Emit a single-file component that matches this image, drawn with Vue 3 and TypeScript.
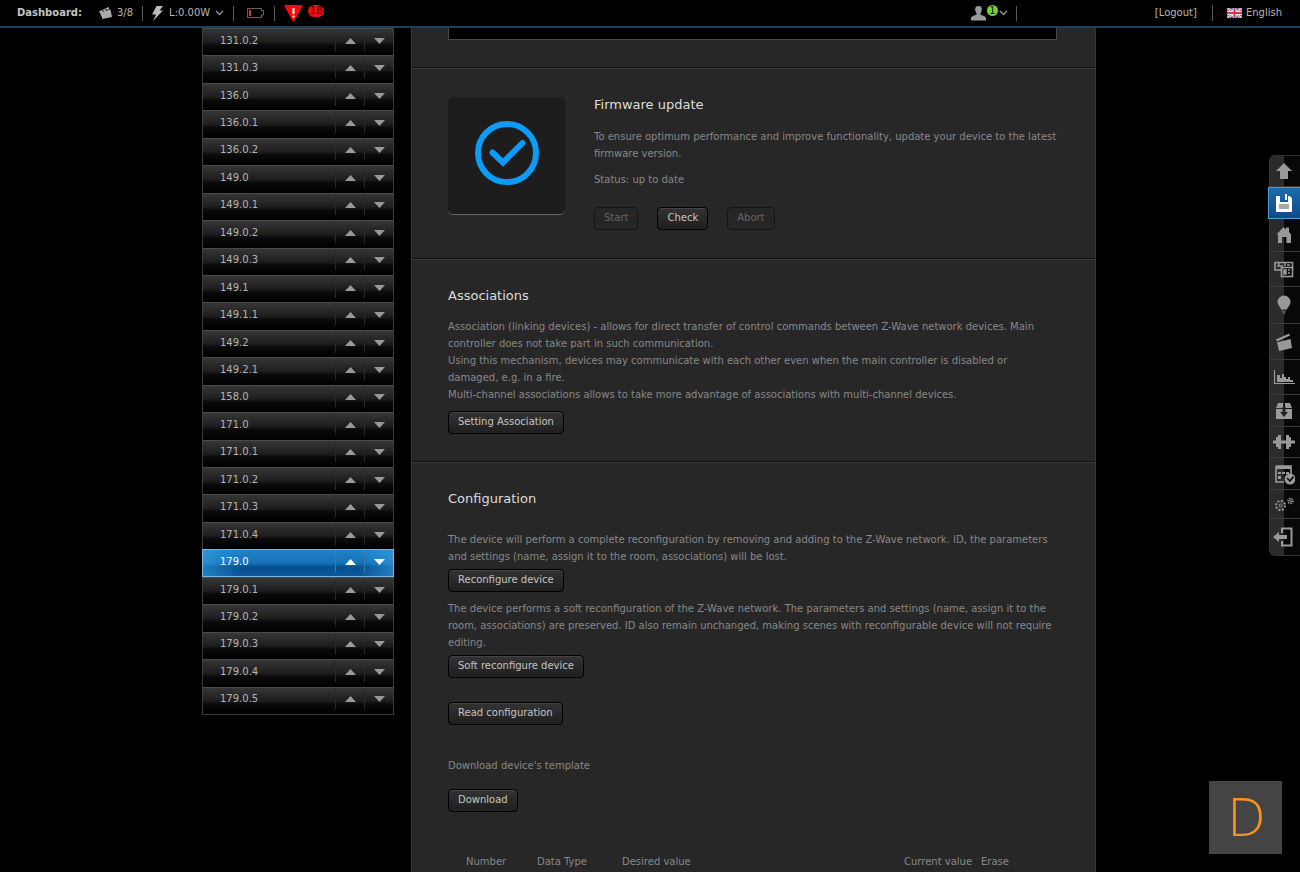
<script setup lang="ts">
interface RailItem {
  name: string
  height: number
  active?: boolean
}

const devices: string[] = [
  '131.0.2', '131.0.3', '136.0', '136.0.1', '136.0.2', '149.0', '149.0.1', '149.0.2',
  '149.0.3', '149.1', '149.1.1', '149.2', '149.2.1', '158.0', '171.0', '171.0.1',
  '171.0.2', '171.0.3', '171.0.4', '179.0', '179.0.1', '179.0.2', '179.0.3', '179.0.4', '179.0.5',
]
const selected = '179.0'

const rail: RailItem[] = [
  { name: 'Top', height: 31 },
  { name: 'Save', height: 32, active: true },
  { name: 'Home', height: 33 },
  { name: 'Devices', height: 35 },
  { name: 'Lights', height: 37 },
  { name: 'Scenes', height: 36 },
  { name: 'Charts', height: 35 },
  { name: 'Packages', height: 32 },
  { name: 'Plugins', height: 31 },
  { name: 'Schedule', height: 32 },
  { name: 'Settings', height: 29 },
  { name: 'Exit', height: 36 },
]
</script>

<template>
  <div class="page">
    <header class="topbar">
      <div class="group left">
        <strong class="brand">Dashboard:</strong>
        <a href="#" class="stat scenes">
          <svg width="13" height="12" viewBox="0 0 13 12"><path d="M0 4.500 L9.500 0 L10.500 2 L1 6.300 Z M1 5.800 L11.500 2.500 L13 10 L3.500 12 Z" fill="#aaa" /><path d="M3 3.500 l2 1 M6 2 l2 1" stroke="#111" stroke-width=".8" /></svg>
          3/8
        </a>
        <a href="#" class="stat power">
          <svg width="12" height="15" viewBox="0 0 12 15"><path d="M4.500 0 H11 L7.500 4.500 H11 L1 15 L4 8.500 H0 Z" fill="#bbb" /></svg>
          L:0.00W
          <svg class="chev" width="9" height="6" viewBox="0 0 9 6"><path d="M1 1 L4.500 4.500 L8 1" fill="none" stroke="#999" stroke-width="1.300" /></svg>
        </a>
        <a href="#" class="stat battery" aria-label="Battery">
          <svg width="17" height="10" viewBox="0 0 17 10"><path d="M.500 .500 H14.500 V2.500 H16.500 V7 H14.500 V9.500 H.500 Z" fill="none" stroke="#666" /><path d="M10 .500 H.500 V9.500 H10" fill="none" stroke="#84504a" /><rect x="2" y="2" width="2" height="6" fill="#c3402c" /></svg>
        </a>
        <a href="#" class="stat alarm">
          <svg width="19" height="17" viewBox="0 0 19 17"><path d="M1.500 1 H17.500 L9.500 15.500 Z" fill="#f00d0d" stroke="#f00d0d" stroke-width="2" stroke-linejoin="round" /><path d="M9.500 3 V9 M9.500 10.500 V12.500" stroke="#fff" stroke-width="2" /></svg>
          <span class="badge red">18</span>
        </a>
      </div>
      <a href="#" class="stat user">
        <svg width="15" height="15" viewBox="0 0 15 15"><path d="M7.500 0 C10 0 11 1.500 10.800 3.800 C10.700 6 9.600 6.800 9.300 8 C9.300 9.200 14.500 9.600 15 12 V14.500 H0 V12 C.500 9.600 5.700 9.200 5.700 8 C5.400 6.800 4.300 6 4.200 3.800 C4 1.500 5 0 7.500 0 Z" fill="#999" /></svg>
        <span class="badge green">1</span>
        <svg class="chev" width="9" height="6" viewBox="0 0 9 6"><path d="M1 1 L4.500 4.500 L8 1" fill="none" stroke="#999" stroke-width="1.300" /></svg>
      </a>
      <div class="group right">
        <a href="#" class="logout">[Logout]</a>
        <a href="#" class="language">
          <svg width="15" height="10" viewBox="0 0 15 10"><rect width="15" height="10" fill="#4a5fa8" /><path d="M0 0 L15 10 M15 0 L0 10" stroke="#fff" stroke-width="2.200" /><path d="M0 0 L15 10 M15 0 L0 10" stroke="#e0304a" stroke-width=".8" /><path d="M7.500 0 V10 M0 5 H15" stroke="#fff" stroke-width="3.600" /><path d="M7.500 0 V10 M0 5 H15" stroke="#e0304a" stroke-width="2" /></svg>
          English
        </a>
      </div>
    </header>

    <div class="content">
      <nav aria-label="Devices">
        <ul class="devices">
          <li v-for="d in devices" :key="d" class="device" :class="{ selected: d === selected }">
            <a href="#">{{ d }}</a>
            <button type="button" class="move" :aria-label="`Move ${d} up`">
              <svg width="11" height="6" viewBox="0 0 11 6"><path d="M5.500 0 L11 6 H0 Z" fill="currentColor" /></svg>
            </button>
            <button type="button" class="move" :aria-label="`Move ${d} down`">
              <svg width="11" height="6" viewBox="0 0 11 6"><path d="M0 0 H11 L5.500 6 Z" fill="currentColor" /></svg>
            </button>
          </li>
        </ul>
      </nav>

      <main class="panel">
        <section class="block preview"><div class="frame"></div></section>

        <section class="block firmware">
          <div class="tile">
            <svg width="64" height="64" viewBox="0 0 64 64" fill="none" stroke="#0c9bf5"><circle cx="32" cy="32" r="29" stroke-width="6" /><path d="M17.500 31.500 L28 41.500 L47.500 22" stroke-width="6" stroke-linecap="round" /></svg>
          </div>
          <div class="info">
            <h2>Firmware update</h2>
            <p>To ensure optimum performance and improve functionality, update your device to the latest<br>firmware version.</p>
            <p class="status">Status: up to date</p>
            <div class="actions">
              <button type="button" class="btn" disabled>Start</button>
              <button type="button" class="btn">Check</button>
              <button type="button" class="btn" disabled>Abort</button>
            </div>
          </div>
        </section>

        <section class="block associations">
          <h2>Associations</h2>
          <p>
            Association (linking devices) - allows for direct transfer of control commands between Z-Wave network devices. Main<br>
            controller does not take part in such communication.<br>
            Using this mechanism, devices may communicate with each other even when the main controller is disabled or<br>
            damaged, e.g. in a fire.<br>
            Multi-channel associations allows to take more advantage of associations with multi-channel devices.
          </p>
          <button type="button" class="btn">Setting Association</button>
        </section>

        <section class="block configuration">
          <h2>Configuration</h2>
          <p>
            The device will perform a complete reconfiguration by removing and adding to the Z-Wave network. ID, the parameters<br>
            and settings (name, assign it to the room, associations) will be lost.
          </p>
          <button type="button" class="btn">Reconfigure device</button>
          <p>
            The device performs a soft reconfiguration of the Z-Wave network. The parameters and settings (name, assign it to the<br>
            room, associations) are preserved. ID also remain unchanged, making scenes with reconfigurable device will not require<br>
            editing.
          </p>
          <button type="button" class="btn">Soft reconfigure device</button>
          <button type="button" class="btn read">Read configuration</button>
          <p class="template">Download device's template</p>
          <button type="button" class="btn">Download</button>
          <table class="params">
            <thead>
              <tr>
                <th class="number">Number</th>
                <th class="type">Data Type</th>
                <th class="desired">Desired value</th>
                <th class="current">Current value</th>
                <th>Erase</th>
              </tr>
            </thead>
          </table>
        </section>
      </main>
    </div>

    <nav class="rail" aria-label="Tools">
      <a v-for="item in rail" :key="item.name" href="#" :aria-label="item.name" :class="{ active: item.active }" :style="{ height: item.height + 'px' }">
        <svg width="22" height="22" viewBox="0 0 22 22" fill="currentColor">
          <path v-if="item.name === 'Top'" d="M11 3 L19 11 H15 V19 H7 V11 H3 Z" />
          <g v-else-if="item.name === 'Save'"><path d="M3 4 H7 V10 H15 V4 H16.500 L19 6 V20 H3 Z" /><rect x="12" y="2" width="2" height="6" /><rect x="6" y="12" width="10" height="5" fill="#a9a9a0" /></g>
          <path v-else-if="item.name === 'Home'" d="M4 10 L10.500 3 L13 5.500 V3.500 H16 V8 L18 10.500 V19 H13.500 V13 H9 V19 H5 V11 Z" />
          <g v-else-if="item.name === 'Devices'"><path d="M2 4.500 H19.500 V11 M2 4 V12 H8 M6 7 V4 M12 4 V8" fill="none" stroke="currentColor" stroke-width="1.600" /><rect x="8.500" y="9.500" width="11" height="9" fill="none" stroke="currentColor" stroke-width="1.600" /><path d="M4 8 H10 M11 12 H13 V16 H11 Z M15 12 H17 M15 15 H17 M14 7 H17" stroke="currentColor" stroke-width="1.600" /></g>
          <g v-else-if="item.name === 'Lights'"><circle cx="11" cy="8" r="6.500" /><path d="M7 13 H15 L14 15.500 H8 Z" /><path d="M8.500 16.500 H13.500 L11 21 Z" fill="#555" /></g>
          <g v-else-if="item.name === 'Scenes'"><path d="M3 8.500 L16 2.500 L17 4.500 L4 10.500 Z M4 11.500 L17.500 8 L19 17 L6 20 Z" /></g>
          <g v-else-if="item.name === 'Charts'"><path d="M1.500 4 V17.500 H22" fill="none" stroke="currentColor" stroke-width="1.200" /><path d="M4 16 V9 H7 V12 H9 V8 H11 V11 H13 V13 H15 V11 H17 V14 H20 V16 Z" /></g>
          <g v-else-if="item.name === 'Packages'"><path d="M5 3 H10 V8 H3 Z M12 3 H17 L19 8 H12 Z M3 9 H19 V19 H3 Z" /><path d="M11 7 V13" stroke="#222" stroke-width="3" /><path d="M7 12 H15 L11 17 Z" fill="#222" /></g>
          <path v-else-if="item.name === 'Plugins'" d="M0 9.500 H3 V6 H5 V4 H8 V9.500 H13 V4 H16 V6 H18 V9.500 H22 V12.500 H18 V16 H16 V18 H13 V12.500 H8 V18 H5 V16 H3 V12.500 H0 Z" />
          <g v-else-if="item.name === 'Schedule'"><path d="M3 3 H18 V12 M3 3 V19 H11" fill="none" stroke="currentColor" stroke-width="1.600" /><path d="M3 3 H18 V6 H3 Z M5 9 h3 v2 h-3 Z M9 9 h3 v2 h-3 Z M5 13 h3 v3 h-3 Z M13 9 h3 v2 h-3 Z" /><circle cx="17" cy="16" r="5.500" /><path d="M14 15 L17 18 L20.500 13.500" fill="none" stroke="#000" stroke-width="1.500" /></g>
          <g v-else-if="item.name === 'Settings'" fill="none" stroke="currentColor"><circle cx="7.500" cy="12.500" r="4.500" stroke-width="2" stroke-dasharray="2 1.500" /><circle cx="7.500" cy="12.500" r="1.500" /><circle cx="17.500" cy="8" r="2.500" stroke-width="1.500" stroke-dasharray="1.500 1" /><circle cx="17.500" cy="8" r="1" /></g>
          <g v-else><path d="M9 7 V2.500 H18.500 V19.500 H9 V15" fill="none" stroke="currentColor" stroke-width="2" /><path d="M0 11 L6 6 V9 H14 V13 H6 V16 Z" /></g>
        </svg>
      </a>
    </nav>

    <button type="button" class="assistant" aria-label="Open D panel">D</button>
  </div>
</template>

<style>
body {
  margin: 0;
  background: #000;
}
</style>

<style scoped>
.page {
  min-height: 100vh;
  display: flex;
  flex-direction: column;
  background: #000;
  color: #888;
  font: 10px/16px "DejaVu Sans", sans-serif;
}
a {
  color: inherit;
  text-decoration: none;
}
svg {
  flex: none;
}
button {
  font: inherit;
  color: inherit;
}
.topbar {
  box-sizing: border-box;
  height: 28px;
  display: grid;
  grid-template-columns: 1fr auto 265px;
  align-items: center;
  padding: 0 18px 0 17px;
  border-bottom: 2px solid #1d4059;
  color: #b5b5b5;
}
.group,
.stat,
.language {
  display: flex;
  align-items: center;
}
.brand {
  color: #c4c4c4;
  margin-right: 17px;
}
.stat {
  height: 15px;
  gap: 5px;
}
.left .stat + .stat {
  border-left: 1px solid #5a5a5a;
  padding-left: 9px;
  margin-left: 9px;
}
.left .stat + .battery {
  padding-left: 12px;
}
.badge {
  border-radius: 8px;
  text-align: center;
  color: #111;
}
.red {
  width: 16px;
  height: 12px;
  line-height: 12px;
  background: #f00d0d;
  margin-bottom: 5px;
}
.green {
  width: 11px;
  height: 11px;
  line-height: 11px;
  background: #6fd43c;
  margin-bottom: 5px;
}
.user {
  gap: 1px;
  padding-right: 8px;
  border-right: 1px solid #5a5a5a;
}
.right {
  justify-content: flex-end;
}
.logout {
  padding-right: 15px;
  border-right: 1px solid #5a5a5a;
}
.language {
  gap: 4px;
  padding-left: 14px;
}
.content {
  box-sizing: border-box;
  width: 100%;
  max-width: 896px;
  flex: 1;
  margin: 0 auto;
  padding-right: 2px;
  display: grid;
  grid-template-columns: 192px minmax(0, 1fr);
  column-gap: 17px;
}
.devices {
  list-style: none;
  margin: 0;
  padding: 0;
  min-height: 687px;
  display: grid;
  grid-auto-rows: 1fr;
  box-sizing: border-box;
  border: 1px solid #3c3c3c;
  border-top: 0;
}
.device {
  display: grid;
  grid-template-columns: 1fr 29px 29px;
  align-items: center;
  padding-bottom: 3px;
  border-top: 1px solid #4a4a4a;
  background: linear-gradient(#363636, #1d1d1d 50%, #0a0a0a 62%, #000);
  color: #b4b4b4;
}
.device a {
  padding-left: 17px;
}
.move {
  height: 20px;
  padding: 0;
  border: 0;
  border-left: 1px solid #292929;
  background: none;
  display: grid;
  place-items: center;
  color: #999;
}
.selected {
  margin: 0 -1px;
  border: 1px solid #79b5dc;
  background: linear-gradient(90deg, #35a5e688, #0000 20%, #0000 82%, #35a5e688), linear-gradient(#2182c6, #1572b8 50%, #07508f 65%, #0c579c);
  color: #fff;
}
.selected .move {
  border-color: #3a78ad;
  color: #fff;
}
.panel {
  display: flex;
  flex-direction: column;
  background: #272727;
  border-left: 1px solid #363636;
  border-right: 1px solid #363636;
}
.block {
  padding: 0 38px 0 36px;
  border-top: 1px solid #3b3b3b;
  border-bottom: 1px solid #101010;
}
.preview {
  border-top: 0;
  padding-bottom: 27px;
}
.frame {
  height: 11px;
  background: #000;
  border: 1px solid #484848;
  border-top: 0;
}
h2 {
  margin: 0;
  font-size: 13px;
  line-height: 16px;
  font-weight: normal;
  color: #ddd;
}
p {
  margin: 0;
  line-height: 17px;
  white-space: nowrap;
}
.firmware {
  display: flex;
  gap: 29px;
  padding-top: 28px;
  padding-bottom: 28px;
}
.tile {
  box-sizing: border-box;
  width: 117px;
  height: 118px;
  display: grid;
  place-items: center;
  background: #1d1d1d;
  border-radius: 5px;
  border-bottom: 1px solid #666;
  padding-bottom: 6px;
}
.firmware h2 {
  margin-bottom: 15px;
}
.status {
  margin-top: 9px;
}
.actions {
  display: flex;
  gap: 19px;
  margin-top: 19px;
}
.btn {
  display: block;
  height: 23px;
  padding: 0 9px 1px;
  border: 1px solid #000;
  border-radius: 4px;
  background: linear-gradient(#333, #1f1f1f);
  box-shadow: inset 0 1px #444;
  color: #c4c4c4;
}
.btn:disabled {
  background: #262626;
  border-color: #151515;
  box-shadow: none;
  color: #666;
}
.associations {
  padding-top: 28px;
  padding-bottom: 27px;
}
.associations h2 {
  margin-bottom: 14px;
}
.associations .btn {
  margin-top: 8px;
}
.configuration {
  flex: 1;
  border-bottom: 0;
  padding-top: 28px;
}
.configuration h2 {
  margin-bottom: 24px;
}
.configuration .btn {
  margin: 4px 0 8px;
}
.configuration .read {
  margin-top: 24px;
}
.configuration .template {
  margin: 32px 0 15px;
}
.configuration .params {
  width: 100%;
  margin-top: 42px;
  table-layout: fixed;
  border-collapse: collapse;
}
.params th {
  padding: 0;
  text-align: left;
  font-weight: normal;
}
.params .number {
  width: 71px;
  padding-left: 18px;
}
.params .type {
  width: 85px;
}
.params .desired {
  width: 282px;
}
.params .current {
  width: 77px;
}
.rail {
  position: fixed;
  top: 155px;
  right: 0;
  width: 30px;
  border: 1px solid #333;
  border-right: 0;
  border-radius: 6px 0 0 6px;
  background: linear-gradient(90deg, #2b2b2b 14px, #080808 14px);
  color: #999;
}
.rail a {
  box-sizing: border-box;
  display: flex;
  align-items: center;
  padding-left: 3px;
  border-bottom: 1px solid #3a3a3a;
}
.rail a:last-child {
  border-bottom: 0;
}
.rail .active {
  margin-left: -2px;
  padding-left: 4px;
  border: 1px solid #4e9bcf;
  border-right: 0;
  background: linear-gradient(#1b6cab, #0e4b88);
  color: #fff;
}
.assistant {
  position: fixed;
  right: 18px;
  bottom: 18px;
  width: 73px;
  height: 73px;
  padding: 0 0 4px 2px;
  border: 0;
  background: #444;
  color: #f7931e;
  font: 300 53px/69px "Open Sans", sans-serif;
}
.left .stat + .battery {
  padding-right: 1px;
  padding-left: 13px;
}
</style>
